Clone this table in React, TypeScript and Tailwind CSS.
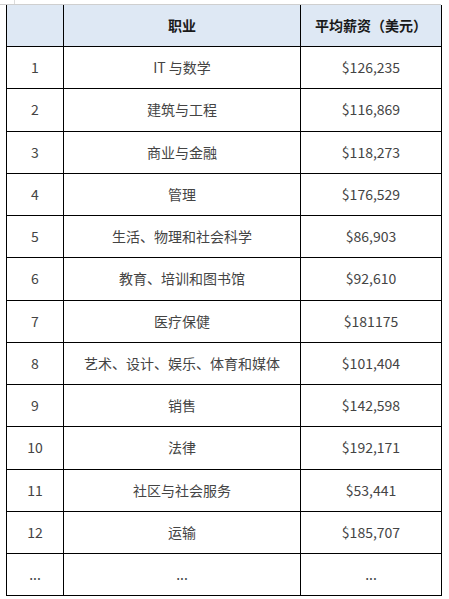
const rows: [string, string, string][] = [
  ['1', 'IT 与数学', '$126,235'],
  ['2', '建筑与工程', '$116,869'],
  ['3', '商业与金融', '$118,273'],
  ['4', '管理', '$176,529'],
  ['5', '生活、物理和社会科学', '$86,903'],
  ['6', '教育、培训和图书馆', '$92,610'],
  ['7', '医疗保健', '$181175'],
  ['8', '艺术、设计、娱乐、体育和媒体', '$101,404'],
  ['9', '销售', '$142,598'],
  ['10', '法律', '$192,171'],
  ['11', '社区与社会服务', '$53,441'],
  ['12', '运输', '$185,707'],
  ['...', '...', '...'],
];

function Row({ cells, header }: { cells: [string, string, string]; header?: boolean }) {
  const base = 'flex items-center justify-center border-r border-black';
  return (
    <div
      className={`grid grid-cols-[57px_237px_141px] border-l border-b border-black ${
        header ? 'h-[42px] bg-[#dee8f4] font-bold text-[#1a1a1a]' : 'h-[42.25px] text-[#444]'
      }`}
    >
      <div className={base}>{cells[0]}</div>
      <div className={base}>{cells[1]}</div>
      <div className={base}>{cells[2]}</div>
    </div>
  );
}

export default function App() {
  return (
    <div className="relative h-[599px] w-[449px] bg-white pt-[4px] pl-[6px] font-['Noto_Sans_CJK_SC',sans-serif] text-[14px]">
      {/* faint sheet gridline above the table */}
      <div className="absolute top-[4px] left-0 h-px w-[441px] bg-[#cfcfcf]" />
      <div className="absolute top-0 left-[14px] h-[4px] w-px bg-[#dcdcdc]" />
      <div className="w-[436px] pt-px">
        <Row header cells={['', '职业', '平均薪资（美元）']} />
        {rows.map((r) => (
          <Row key={r[0] + r[1]} cells={r} />
        ))}
      </div>
    </div>
  );
}
